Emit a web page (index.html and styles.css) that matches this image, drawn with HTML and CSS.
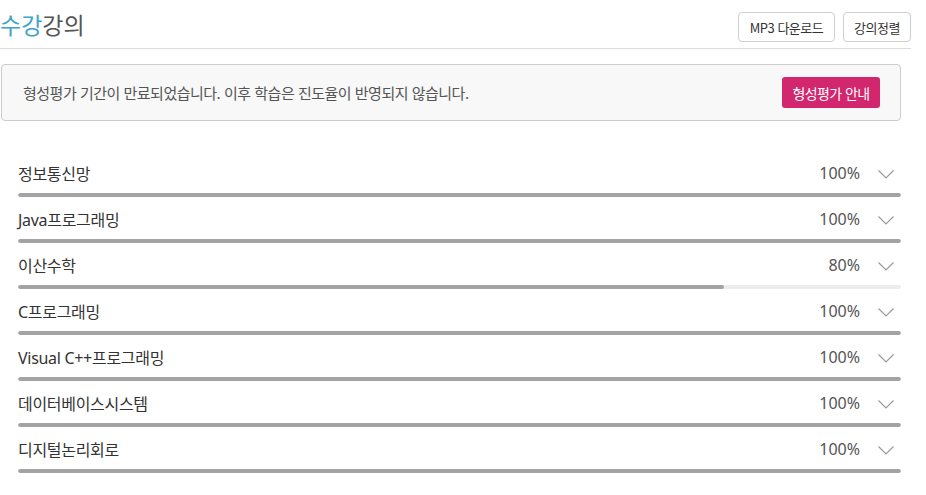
FILE: index.html
```html
<!DOCTYPE html>
<html lang="ko">
<head>
<meta charset="utf-8">
<title>수강강의</title>
<link rel="stylesheet" href="styles.css">
</head>
<body>
<div class="page">
  <header class="head">
    <h1 class="title"><span class="title-accent">수강</span>강의</h1>
    <div class="head-actions">
      <button class="btn-line btn-mp3">MP3 다운로드</button>
      <button class="btn-line btn-sort">강의정렬</button>
    </div>
  </header>

  <div class="notice">
    <p class="notice-text">형성평가 기간이 만료되었습니다. 이후 학습은 진도율이 반영되지 않습니다.</p>
    <button class="btn-pink">형성평가 안내</button>
  </div>

  <ul class="courses">
    <li class="course">
      <div class="course-line"><span class="course-name">정보통신망</span><span class="course-pct">100%</span><svg class="chev" width="16" height="9" viewBox="0 0 16 9"><polyline points="0.5,0.5 8,8 15.5,0.5" fill="none" stroke="#9a9a9a" stroke-width="1.2"/></svg></div>
      <div class="bar"><div class="bar-fill" style="width:100%"></div></div>
    </li>
    <li class="course">
      <div class="course-line"><span class="course-name">Java프로그래밍</span><span class="course-pct">100%</span><svg class="chev" width="16" height="9" viewBox="0 0 16 9"><polyline points="0.5,0.5 8,8 15.5,0.5" fill="none" stroke="#9a9a9a" stroke-width="1.2"/></svg></div>
      <div class="bar"><div class="bar-fill" style="width:100%"></div></div>
    </li>
    <li class="course">
      <div class="course-line"><span class="course-name">이산수학</span><span class="course-pct">80%</span><svg class="chev" width="16" height="9" viewBox="0 0 16 9"><polyline points="0.5,0.5 8,8 15.5,0.5" fill="none" stroke="#9a9a9a" stroke-width="1.2"/></svg></div>
      <div class="bar"><div class="bar-fill" style="width:80%"></div></div>
    </li>
    <li class="course">
      <div class="course-line"><span class="course-name">C프로그래밍</span><span class="course-pct">100%</span><svg class="chev" width="16" height="9" viewBox="0 0 16 9"><polyline points="0.5,0.5 8,8 15.5,0.5" fill="none" stroke="#9a9a9a" stroke-width="1.2"/></svg></div>
      <div class="bar"><div class="bar-fill" style="width:100%"></div></div>
    </li>
    <li class="course">
      <div class="course-line"><span class="course-name">Visual C++프로그래밍</span><span class="course-pct">100%</span><svg class="chev" width="16" height="9" viewBox="0 0 16 9"><polyline points="0.5,0.5 8,8 15.5,0.5" fill="none" stroke="#9a9a9a" stroke-width="1.2"/></svg></div>
      <div class="bar"><div class="bar-fill" style="width:100%"></div></div>
    </li>
    <li class="course">
      <div class="course-line"><span class="course-name">데이터베이스시스템</span><span class="course-pct">100%</span><svg class="chev" width="16" height="9" viewBox="0 0 16 9"><polyline points="0.5,0.5 8,8 15.5,0.5" fill="none" stroke="#9a9a9a" stroke-width="1.2"/></svg></div>
      <div class="bar"><div class="bar-fill" style="width:100%"></div></div>
    </li>
    <li class="course">
      <div class="course-line"><span class="course-name">디지털논리회로</span><span class="course-pct">100%</span><svg class="chev" width="16" height="9" viewBox="0 0 16 9"><polyline points="0.5,0.5 8,8 15.5,0.5" fill="none" stroke="#9a9a9a" stroke-width="1.2"/></svg></div>
      <div class="bar"><div class="bar-fill" style="width:100%"></div></div>
    </li>
  </ul>
</div>
</body>
</html>
```

FILE: styles.css
```css
* { box-sizing: border-box; }

body {
  margin: 0;
  background: #fff;
  font-family: "Noto Sans CJK KR", "Noto Sans", sans-serif;
  color: #333;
}

.page {
  width: 911px;
}

.head {
  display: flex;
  align-items: center;
  justify-content: space-between;
  height: 49px;
  padding-top: 6px;
  border-bottom: 1px solid #dcdcdc;
}

.title {
  margin: 0 0 7px 0;
  font-size: 23px;
  font-weight: 400;
  line-height: 30px;
  color: #555;
}

.title-accent {
  color: #3ea3c9;
}

.head-actions {
  display: flex;
  gap: 8px;
}

.btn-line {
  height: 30px;
  padding: 0;
  border: 1px solid #cfcfcf;
  border-radius: 4px;
  background: #fff;
  font-family: inherit;
  font-size: 13px;
  color: #333;
  letter-spacing: -0.5px;
}

.btn-mp3 { width: 97px; }
.btn-sort { width: 68px; }

.notice {
  display: flex;
  align-items: center;
  justify-content: space-between;
  width: 900px;
  height: 57px;
  margin: 15px 0 0 1px;
  padding: 0 20px 0 21px;
  background: #f8f8f8;
  border: 1px solid #cccccc;
  border-radius: 4px;
}

.notice-text {
  margin: 0;
  font-size: 15px;
  color: #555;
  letter-spacing: -0.5px;
}

.btn-pink {
  width: 98px;
  height: 31px;
  padding: 0;
  border: 0;
  border-radius: 3px;
  background: #d2266e;
  color: #fff;
  font-family: inherit;
  font-size: 14px;
  letter-spacing: -0.6px;
}

.courses {
  list-style: none;
  margin: 30px 0 0 18px;
  padding: 0;
  width: 883px;
}

.course {
  padding-top: 10px;
}

.course-line {
  display: flex;
  align-items: center;
  height: 24px;
  margin-bottom: 8px;
}

.course-name {
  flex: 1;
  font-family: "Noto Sans", "Noto Sans CJK KR", sans-serif;
  font-size: 16px;
  color: #333;
  letter-spacing: -0.3px;
}

.course-pct {
  font-family: "Noto Sans", "Noto Sans CJK KR", sans-serif;
  font-size: 16px;
  color: #555;
}

.chev {
  display: block;
  margin: 2px 7px 0 18px;
}

.bar {
  height: 4px;
  border-radius: 2px;
  background: #ececec;
  overflow: hidden;
}

.bar-fill {
  height: 100%;
  background: #a3a3a3;
  border-radius: 2px;
}
```
